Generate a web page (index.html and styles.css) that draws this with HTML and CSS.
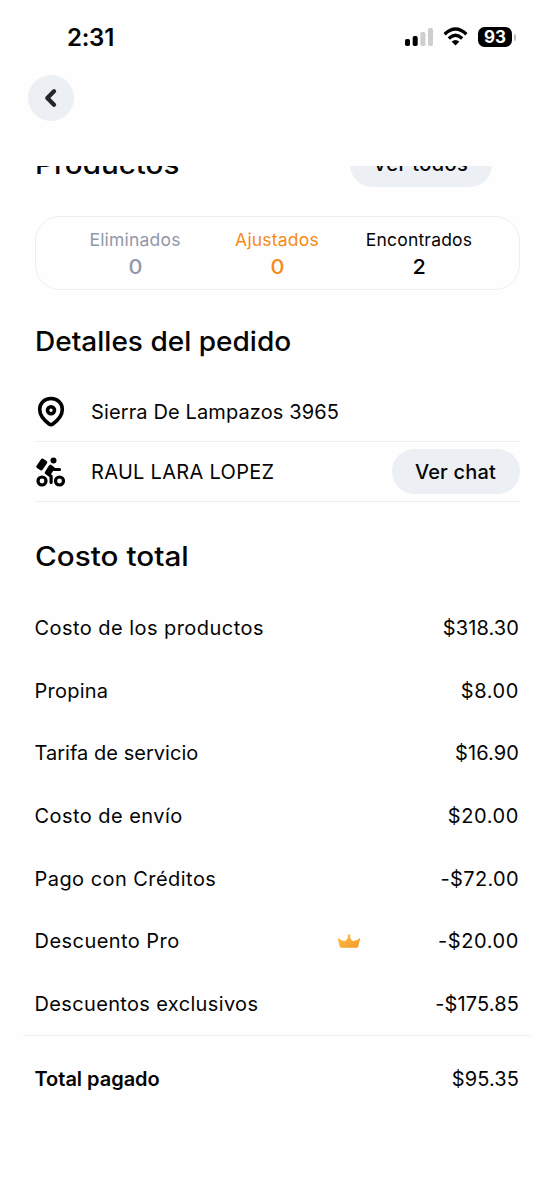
FILE: index.html
```html
<!DOCTYPE html>
<html lang="es">
<head>
<meta charset="utf-8">
<meta name="viewport" content="width=device-width">
<title>Detalles del pedido</title>
<link rel="stylesheet" href="styles.css">
</head>
<body>
<div class="screen">
  <header class="status">
    <span class="time">2:31</span>
    <div class="indicators">
      <svg class="signal" width="28" height="19" viewBox="0 0 28 19"><rect x="0" y="11" width="5" height="7" rx="1.7"/><rect x="7.7" y="8" width="5" height="10" rx="1.7"/><g fill="#ceced0"><rect x="15.4" y="4" width="5" height="14" rx="1.7"/><rect x="23" y="0" width="5" height="18" rx="1.7"/></g></svg>
      <svg class="wifi" width="25" height="19" viewBox="0 0 25 19"><g fill="none" stroke="#000" stroke-width="3.3"><path d="M1.6 7.2Q12.5-3.2 23.4 7.2"/><path d="M5.8 11.5Q12.5 5.2 19.2 11.5"/></g><path d="M8.6 14.5Q12.5 11.4 16.4 14.5L12.5 18.5Z"/></svg>
      <div class="battery"><span class="level">93</span><i class="cap"></i></div>
    </div>
  </header>
  <nav class="nav">
    <button class="back" aria-label="Volver"><svg width="46" height="46" viewBox="0 0 46 46"><path d="M26 16.300L19.300 23l6.700 6.700" fill="none" stroke="#24262c" stroke-width="4.300" stroke-linecap="round" stroke-linejoin="round"/></svg></button>
  </nav>
  <main class="content">
    <section class="products">
      <h2 class="heading productos">Productos</h2>
      <button class="pill all">Ver todos</button>
    </section>
    <section class="summary">
      <div class="stat removed"><span class="label">Eliminados</span><b class="count">0</b></div>
      <div class="stat adjusted"><span class="label">Ajustados</span><b class="count">0</b></div>
      <div class="stat found"><span class="label">Encontrados</span><b class="count">2</b></div>
    </section>
    <h2 class="heading details">Detalles del pedido</h2>
    <div class="detail">
      <svg class="icon" width="32" height="34" viewBox="0 0 32 34"><path d="M16 3.500C9.100 3.500 4.700 8.300 4.700 14.500c0 6.800 5.300 11.400 9.400 14.500q1.900 1.400 3.800 0c4.100-3.100 9.400-7.700 9.400-14.500C27.300 8.300 22.900 3.500 16 3.500Z" fill="none" stroke="#000" stroke-width="3.600"/><circle cx="16" cy="15.300" r="3.500" fill="none" stroke="#000" stroke-width="3.600"/></svg>
      <span class="text address">Sierra De Lampazos 3965</span>
    </div>
    <div class="detail courier">
      <svg class="icon" width="32" height="34" viewBox="0 0 32 34"><rect x="-3.600" y="-5.500" width="7.200" height="11" rx="1.500" transform="translate(6.800 9.500) rotate(34)"/><circle cx="18.500" cy="5.400" r="3"/><g fill="none" stroke="#000" stroke-width="3.200"><circle cx="7" cy="26" r="4"/><circle cx="24.500" cy="26" r="4"/></g><path d="M15.500 11.300L19 14.300l5.500.2M14.800 12L11.300 17.800l4.800 3.500v6.200" fill="none" stroke="#000" stroke-width="3.200" stroke-linecap="round" stroke-linejoin="round"/><path d="M15.500 10.500L19.500 14l-3.600 5.200-3-1Z"/></svg>
      <span class="text name">RAUL LARA LOPEZ</span>
      <button class="pill chat">Ver chat</button>
    </div>
    <h2 class="heading cost">Costo total</h2>
    <div class="costs">
      <div class="row"><span class="wide">Costo de los productos</span><span class="amount">$318.30</span></div>
      <div class="row"><span>Propina</span><span class="amount open">$8.00</span></div>
      <div class="row"><span class="snug">Tarifa de servicio</span><span class="amount">$16.90</span></div>
      <div class="row"><span class="wide">Costo de envío</span><span class="amount open">$20.00</span></div>
      <div class="row"><span class="wide">Pago con Créditos</span><span class="amount debit">-$72.00</span></div>
      <div class="row"><span class="wide">Descuento Pro</span><svg class="crown" width="24" height="14" viewBox="0 0 24 14"><defs><linearGradient id="gold" x2="1" y2="1"><stop stop-color="#ffc04a"/><stop offset="1" stop-color="#f29a28"/></linearGradient></defs><path fill="url(#gold)" d="M1.400 4.200Q5 7.500 8.500 6.800Q10.600 6 11 2.500A1.300 1.300 0 1 1 13 2.500Q13.400 6 15.500 6.800Q19 7.500 22.600 4.200Q23.800 4.500 22.800 6.200L21.200 12.400Q21 13.700 19.500 13.700H4.500Q3 13.700 2.800 12.400L1.200 6.200Q.2 4.500 1.400 4.200Z"/></svg><span class="amount open">-$20.00</span></div>
      <div class="row"><span class="medium">Descuentos exclusivos</span><span class="amount">-$175.85</span></div>
    </div>
    <div class="total"><strong>Total pagado</strong><span class="amount">$95.35</span></div>
  </main>
</div>
</body>
</html>
```
FILE: styles.css
```css
* { box-sizing: border-box; }
body { margin: 0; background: #fefefe; color: #050505; font-family: Inter, "Liberation Sans", sans-serif; }
button { border: 0; padding: 0; font: inherit; color: inherit; }
.screen { width: 554px; height: 1200px; overflow: hidden; }
.status { height: 75px; display: flex; justify-content: space-between; padding: 23px 38px 0 67px; }
.time { font-size: 24px; line-height: 30px; font-weight: 600; letter-spacing: -.25px; }
.indicators { display: flex; align-items: flex-start; padding-top: 4px; }
.signal { margin-top: 1px; }
.wifi { margin-left: 10px; }
.battery { display: flex; align-items: center; margin-left: 10px; }
.level { width: 34px; height: 20px; border-radius: 6.500px; background: #000; color: #fff; text-align: center; font-size: 17px; line-height: 20px; font-weight: 700; }
.cap { width: 2px; height: 7px; margin-left: 2px; border-radius: 0 3px 3px 0; background: #bdbdbf; }
.nav { height: 91px; padding-left: 28px; }
.back { display: block; width: 46px; height: 46px; border-radius: 50%; background: #eceff4; }
.content { padding: 0 34.500px; }
.heading { margin: 0; font-size: 27px; line-height: 34px; font-weight: 550; white-space: nowrap; transform-origin: left center; }
.products { height: 50px; display: flex; justify-content: space-between; align-items: flex-end; overflow: hidden; padding: 0 28px 29px 0; }
.productos { margin-bottom: 5px; transform: scaleX(1.095); }
.pill { height: 45px; border-radius: 23px; background: #eceff4; font-size: 20px; line-height: 46px; font-weight: 500; text-align: center; white-space: nowrap; }
.all { width: 142px; letter-spacing: .4px; line-height: 45px; }
.summary { width: 485px; height: 74px; display: grid; grid-template-columns: repeat(3, 142px); justify-content: center; border: 1.500px solid #eceef2; border-radius: 25px; padding-top: 9px; }
.stat { display: flex; flex-direction: column; align-items: center; }
.label { font-size: 17.500px; line-height: 28px; letter-spacing: .2px; }
.count { font-size: 20px; line-height: 27px; font-weight: 550; transform: scaleX(1.08); }
.removed { color: #9198a9; }
.adjusted { color: #f58b16; }
.details { margin-top: 35px; transform: scaleX(1.038); }
.detail { height: 60px; width: 485px; display: flex; align-items: center; border-bottom: 1.500px solid #eceef2; }
.details + .detail { margin-top: 23px; }
.icon { margin-right: 24.500px; flex: none; }
.text { font-size: 20px; line-height: 26px; white-space: nowrap; }
.address { letter-spacing: .12px; }
.name { letter-spacing: .3px; }
.chat { width: 128px; margin-left: auto; letter-spacing: .2px; }
.cost { margin-top: 38px; transform: scaleX(1.1); }
.costs { margin-top: 23px; }
.row { height: 62.600px; width: 484.500px; display: flex; align-items: center; font-size: 20px; letter-spacing: .25px; white-space: nowrap; }
.wide { letter-spacing: .45px; }
.medium { letter-spacing: .35px; }
.snug { letter-spacing: .03px; }
.amount { margin-left: auto; letter-spacing: .12px; }
.open { letter-spacing: .6px; }
.debit { letter-spacing: .35px; }
.crown { margin-left: 157px; }
.total { height: 86px; width: 508px; margin: 0 -12px; padding: 0 11.500px 0 12px; border-top: 1.500px solid #efeff1; display: flex; align-items: center; font-size: 20px; }
.total strong { font-weight: 600; letter-spacing: -.03px; }
```
